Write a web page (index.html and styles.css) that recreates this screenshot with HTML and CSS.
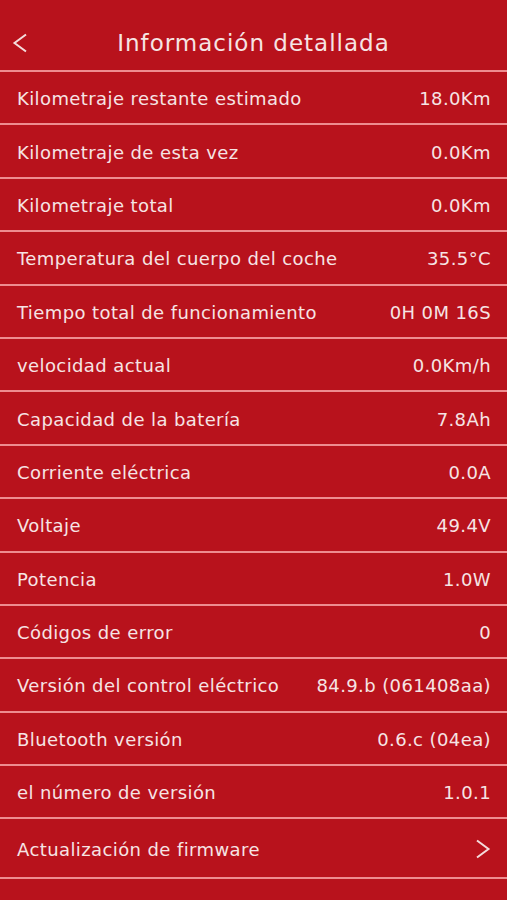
FILE: index.html
```html
<!DOCTYPE html>
<html>
<head lang="es">
    <meta charset="UTF-8">
    <title>Información detallada</title>
    <link rel="stylesheet" href="styles.css">
</head>
<body>
<div class="page">
    <div class="nav">
        <svg class="back" width="16" height="20" viewBox="0 0 16 20">
            <polyline points="14,1.5 2.5,10 14,18.5" fill="none" stroke="#f4dcdc" stroke-width="2"/>
        </svg>
        <h1>Información detallada</h1>
    </div>
    <ul class="list">
        <li><span>Kilometraje restante estimado</span><span>18.0Km</span></li>
        <li><span>Kilometraje de esta vez</span><span>0.0Km</span></li>
        <li><span>Kilometraje total</span><span>0.0Km</span></li>
        <li><span>Temperatura del cuerpo del coche</span><span>35.5°C</span></li>
        <li><span>Tiempo total de funcionamiento</span><span>0H 0M 16S</span></li>
        <li><span>velocidad actual</span><span>0.0Km/h</span></li>
        <li><span>Capacidad de la batería</span><span>7.8Ah</span></li>
        <li><span>Corriente eléctrica</span><span>0.0A</span></li>
        <li><span>Voltaje</span><span>49.4V</span></li>
        <li><span>Potencia</span><span>1.0W</span></li>
        <li><span>Códigos de error</span><span>0</span></li>
        <li><span>Versión del control eléctrico</span><span>84.9.b (061408aa)</span></li>
        <li><span>Bluetooth versión</span><span>0.6.c (04ea)</span></li>
        <li><span>el número de versión</span><span>1.0.1</span></li>
        <li class="link"><span>Actualización de firmware</span>
            <svg width="16" height="20" viewBox="0 0 16 20">
                <polyline points="2,1.5 13.5,10 2,18.5" fill="none" stroke="#f4dcdc" stroke-width="2"/>
            </svg>
        </li>
    </ul>
</div>
</body>
</html>
```

FILE: styles.css
```css
*{
    padding: 0;
    margin: 0;
}
body{
    background: #b8121c;
    font-family: "DejaVu Sans", "Liberation Sans", sans-serif;
    color: #f6e4e4;
}
.page{
    width: 507px;
    min-height: 900px;
}
.nav{
    height: 70px;
    display: flex;
    align-items: center;
    justify-content: center;
    position: relative;
    border-bottom: 2px solid #ee8c90;
}
.nav .back{
    position: absolute;
    left: 12px;
    top: 33px;
}
.nav h1{
    font-size: 23px;
    font-weight: normal;
    letter-spacing: 1px;
    margin-top: 16px;
}
.list{
    list-style: none;
}
.list li{
    display: flex;
    align-items: center;
    justify-content: space-between;
    padding: 2px 16px 0 17px;
    box-sizing: border-box;
    height: 53.4px;
    font-size: 18px;
    letter-spacing: 0.4px;
    border-bottom: 2px solid #ee8c90;
}
.list li.link{
    height: 60px;
}
```
